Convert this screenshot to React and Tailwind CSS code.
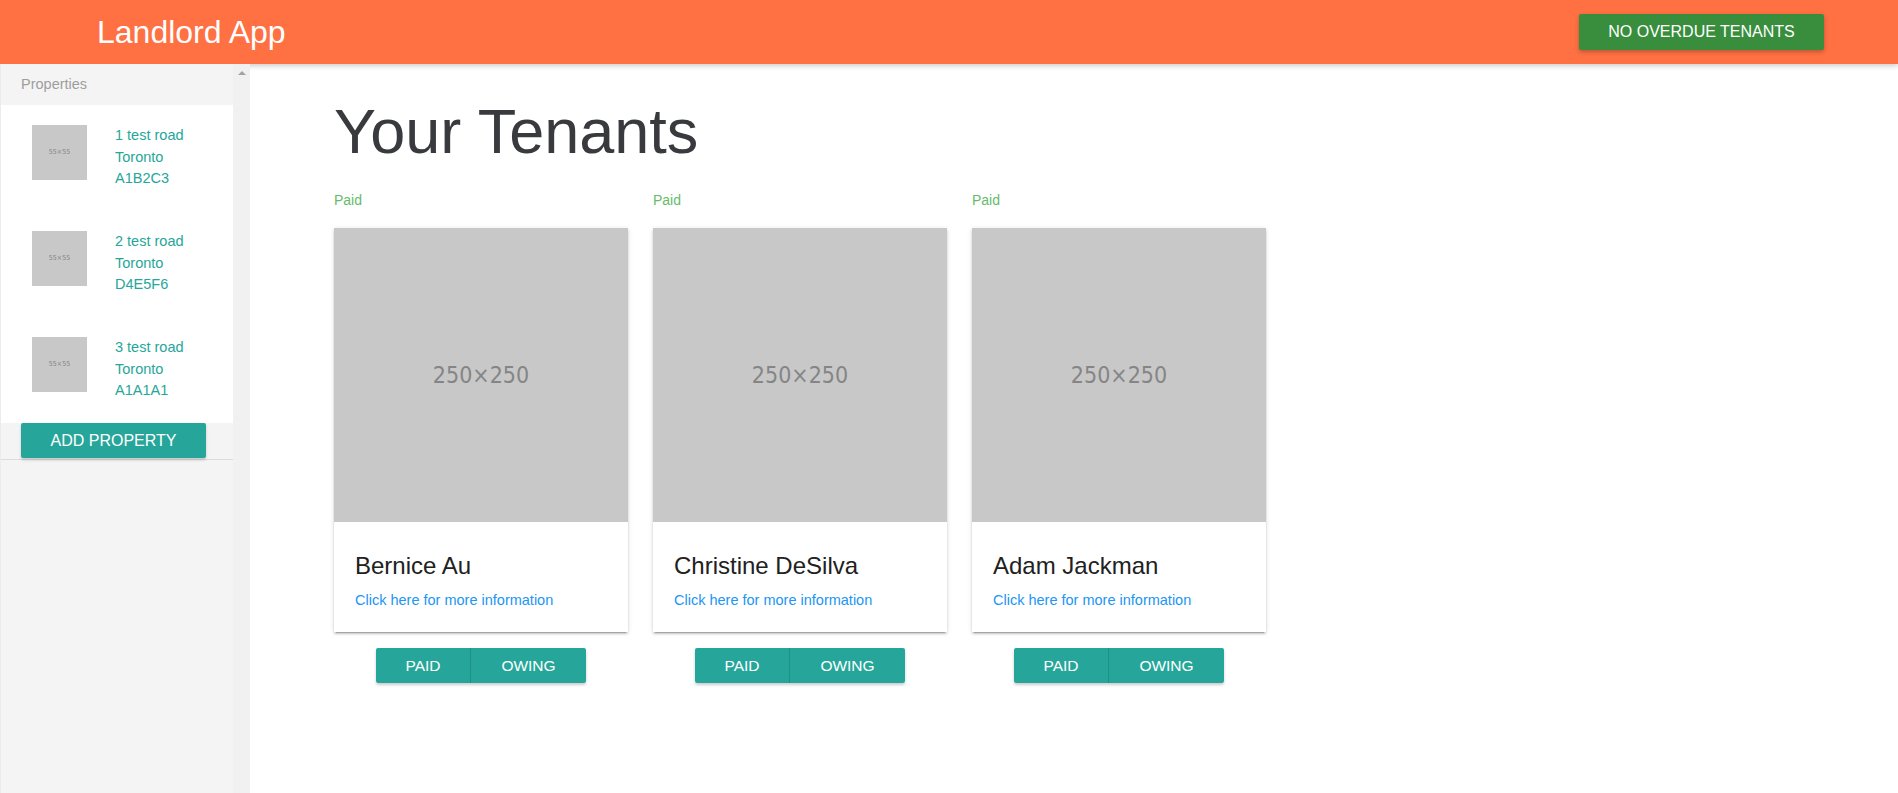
const properties = [
  { id: 1, street: '1 test road', city: 'Toronto', postal: 'A1B2C3' },
  { id: 2, street: '2 test road', city: 'Toronto', postal: 'D4E5F6' },
  { id: 3, street: '3 test road', city: 'Toronto', postal: 'A1A1A1' },
];

const tenants = [
  { id: 1, name: 'Bernice Au', status: 'Paid' },
  { id: 2, name: 'Christine DeSilva', status: 'Paid' },
  { id: 3, name: 'Adam Jackman', status: 'Paid' },
];

const font = { fontFamily: '"Liberation Sans", Arial, sans-serif' };

function Placeholder({ size, label, className }) {
  return (
    <div className={`bg-[#c8c8c8] flex items-center justify-center shrink-0 ${className}`}>
      <span
        className={`text-[#858585] font-stretch-condensed ${size === 'lg' ? 'text-[23px] font-medium' : 'text-[7px]'}`}
        style={{ fontFamily: '"DejaVu Sans Condensed", "DejaVu Sans", sans-serif' }}
      >
        {label}
      </span>
    </div>
  );
}

function Sidebar() {
  return (
    <aside className="relative z-10 flex w-[250px] shrink-0 h-full">
      <div className="w-[233px] bg-[#f4f4f4] border-l border-[#ececec] flex flex-col">
        <div className="h-[41px] flex items-center px-[20px] text-[14.5px] text-[#9e9e9e]">Properties</div>
        <div className="bg-white">
          {properties.map(p => (
            <div key={p.id} className="h-[106px] flex items-start pt-[20px] pl-[31px]">
              <Placeholder size="sm" label="55×55" className="w-[55px] h-[55px]" />
              <div className="ml-[28px] text-[14.5px] leading-[21.5px] text-[#26a69a]">
                <div>{p.street}</div>
                <div>{p.city}</div>
                <div>{p.postal}</div>
              </div>
            </div>
          ))}
        </div>
        <div className="border-b border-[#dcdcdc] pb-px">
          <button className="ml-[20px] w-[185px] h-[35px] bg-[#26a69a] text-white text-[16px] uppercase rounded-[2px] shadow-[0_2px_3px_rgba(0,0,0,0.18)]">
            Add Property
          </button>
        </div>
      </div>
      <div className="w-[17px] bg-[#f1f1f1] flex justify-center pt-[7px]">
        <div className="w-0 h-0 border-l-[4px] border-r-[4px] border-b-[4px] border-l-transparent border-r-transparent border-b-[#a3a3a3]" />
      </div>
    </aside>
  );
}

function TenantCard({ tenant }) {
  return (
    <div className="w-[294px] flex flex-col">
      <div className="text-[14px] leading-[20px] text-[#66bb6a]">{tenant.status}</div>
      <div className="mt-[18px] bg-white shadow-[0_2px_2px_0_rgba(0,0,0,0.14),0_1px_5px_0_rgba(0,0,0,0.12),0_3px_1px_-2px_rgba(0,0,0,0.2)]">
        <Placeholder size="lg" label="250×250" className="w-[294px] h-[294px]" />
        <div className="px-[21px] pt-[32px] pb-[22px]">
          <div className="text-[24px] leading-[24px] text-[#212121]">{tenant.name}</div>
          <a href="#" className="block mt-[12px] text-[14.5px] leading-[20px] text-[#2196f3]">
            Click here for more information
          </a>
        </div>
      </div>
      <div className="mt-[16px] flex justify-center">
        <div className="flex rounded-[2px] overflow-hidden shadow-[0_2px_3px_rgba(0,0,0,0.2)]">
          <button className="w-[95px] h-[35px] bg-[#26a69a] text-white text-[15.5px] uppercase border-r border-[#1f9084]">Paid</button>
          <button className="w-[115px] h-[35px] bg-[#26a69a] text-white text-[15.5px] uppercase">Owing</button>
        </div>
      </div>
    </div>
  );
}

export default function App() {
  return (
    <div className="w-full h-[793px] flex flex-col bg-white overflow-hidden" style={font}>
      <header className="h-[64px] shrink-0 bg-[#ff7043] flex items-center justify-between pl-[97px] pr-[74px] shadow-[0_2px_5px_rgba(0,0,0,0.2)]">
        <div className="text-[32px] text-white leading-none">Landlord App</div>
        <button className="w-[245px] h-[36px] bg-[#388e3c] text-white text-[16px] uppercase rounded-[2px] shadow-[0_2px_4px_rgba(0,0,0,0.25)]">
          No Overdue Tenants
        </button>
      </header>
      <div className="flex flex-1 min-h-0">
        <Sidebar />
        <main className="flex-1 pl-[84px]">
          <h1 className="mt-[34px] text-[63px] leading-[66px] text-[#383a3d]">Your Tenants</h1>
          <div className="mt-[26px] flex gap-[25px]">
            {tenants.map(t => (
              <TenantCard key={t.id} tenant={t} />
            ))}
          </div>
        </main>
      </div>
    </div>
  );
}
